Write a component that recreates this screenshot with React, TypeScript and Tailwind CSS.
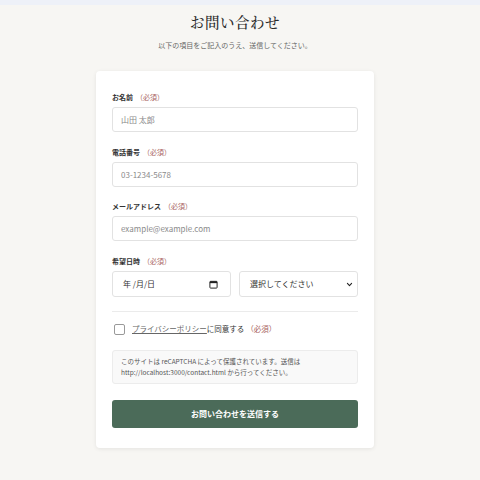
import React from "react";

const Req = () => (
  <span className="ml-[3px] font-normal text-[#a8625e]">（必須）</span>
);

const Label = ({ children }: { children: React.ReactNode }) => (
  <div className="h-[10px] flex items-center text-[7px] font-bold text-[#333] leading-[10px]">
    {children}
    <Req />
  </div>
);

const inputCls =
  "w-full h-[25px] border border-[#e2e2e2] rounded-[3px] bg-white px-[8px] text-[8px] text-[#333] placeholder:text-[#8a8a8a] outline-none";

export default function App() {
  return (
    <div
      className="min-h-[480px] w-[480px] bg-[#f7f6f3] flex flex-col"
      style={{ fontFamily: '"Noto Sans CJK JP", "Noto Sans", sans-serif' }}
    >
      <div className="h-[5px] bg-[#eef1f8]" />
      <div className="w-[470px] flex flex-col">
        <h1
          className="mt-[7px] h-[20px] flex items-center justify-center text-[14.5px] font-medium text-[#2b2b2b] tracking-[0.5px]"
          style={{ fontFamily: '"Noto Serif CJK JP", "Noto Serif JP", "Liberation Serif", serif' }}
        >
          お問い合わせ
        </h1>
        <p className="mt-[8px] h-[10px] flex items-center justify-center text-[7px] text-[#666]">
          以下の項目をご記入のうえ、送信してください。
        </p>
        <div className="mt-[21px] mx-auto w-[278px] bg-white rounded-[4px] shadow-[0_1px_4px_rgba(0,0,0,0.08)] px-[16px] pt-[21px] pb-[20px] flex flex-col">
          <Label>お名前</Label>
          <input className={`${inputCls} mt-[5px]`} placeholder="山田 太郎" />
          <div className="mt-[15px]">
            <Label>電話番号</Label>
          </div>
          <input className={`${inputCls} mt-[5px]`} placeholder="03-1234-5678" />
          <div className="mt-[14px]">
            <Label>メールアドレス</Label>
          </div>
          <input className={`${inputCls} mt-[5px]`} placeholder="example@example.com" />
          <div className="mt-[15px]">
            <Label>希望日時</Label>
          </div>
          <div className="mt-[5px] grid grid-cols-2 gap-[8px]">
            <div className="h-[26px] border border-[#e2e2e2] rounded-[3px] bg-white px-[10px] flex items-center justify-between text-[8px] text-[#333]">
              <span>年 /月/日</span>
              <svg width="9" height="9" viewBox="0 0 10 10" className="mr-[2px]">
                <rect x="1" y="1.5" width="8" height="7.5" rx="0.8" fill="none" stroke="#222" strokeWidth="1.1" />
                <rect x="1" y="1.5" width="8" height="2" fill="#222" />
              </svg>
            </div>
            <div className="h-[26px] border border-[#e2e2e2] rounded-[3px] bg-white pl-[10px] pr-[4px] flex items-center justify-between text-[8px] text-[#333]">
              <span>選択してください</span>
              <svg width="7" height="7" viewBox="0 0 10 10">
                <path d="M2 3.5 L5 6.5 L8 3.5" fill="none" stroke="#222" strokeWidth="1.6" strokeLinecap="round" strokeLinejoin="round" />
              </svg>
            </div>
          </div>
          <div className="mt-[14px] h-px bg-[#ebebeb]" />
          <div className="mt-[11px] h-[12px] flex items-center pl-[2px]">
            <div className="w-[11px] h-[11px] border border-[#999] rounded-[2px] bg-white" />
            <span className="ml-[7px] text-[7.5px] text-[#333]">
              <span className="underline text-[#666]">プライバシーポリシー</span>に同意する
            </span>
            <span className="ml-[2px] text-[7.5px] text-[#a8625e]">（必須）</span>
          </div>
          <div className="mt-[15px] h-[34px] bg-[#f9f9f9] border border-[#ececec] rounded-[3px] px-[8px] flex flex-col justify-center text-[6.5px] font-normal leading-[11px] text-[#555]">
            <span>このサイトは reCAPTCHA によって保護されています。送信は</span>
            <span>http://localhost:3000/contact.html から行ってください。</span>
          </div>
          <button className="mt-[16px] h-[28px] w-full rounded-[3px] bg-[#4b6b59] text-white text-[8px] font-bold">
            お問い合わせを送信する
          </button>
        </div>
      </div>
    </div>
  );
}
